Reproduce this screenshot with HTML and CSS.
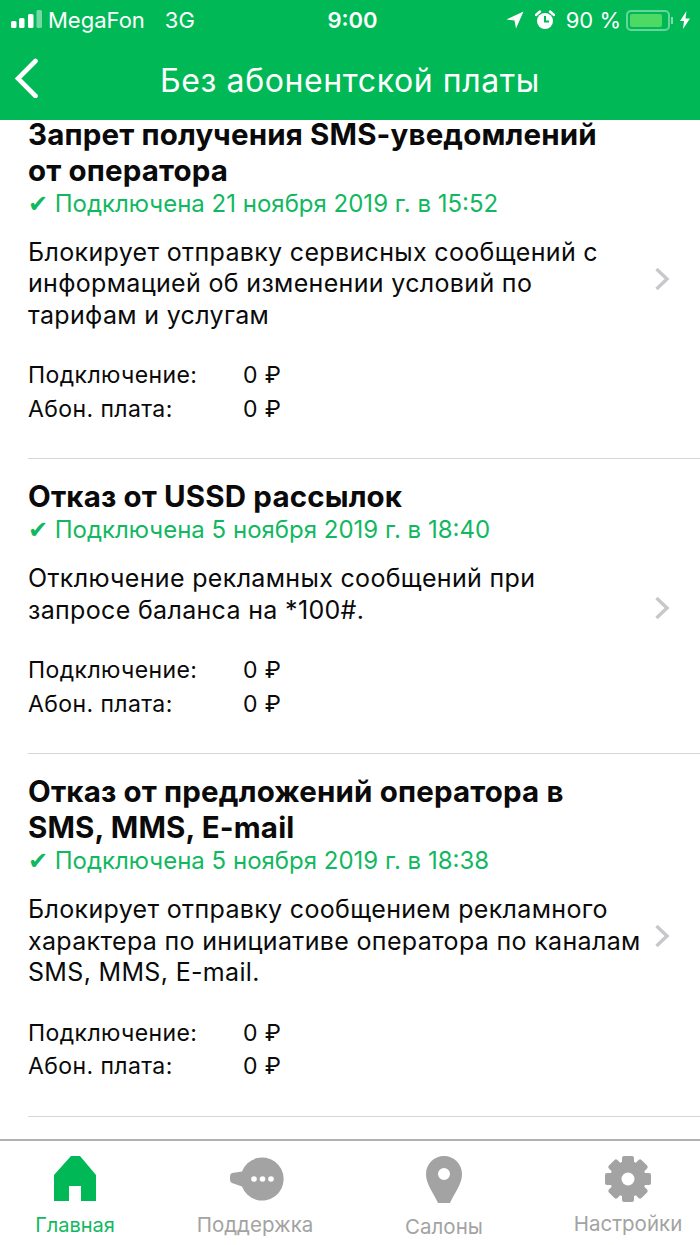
FILE: index.html
```html
<!DOCTYPE html>
<html lang="ru">
<head>
    <meta charset="UTF-8">
    <meta name="viewport" content="width=device-width, initial-scale=1.0">
    <title>Без абонентской платы</title>
    <link rel="stylesheet" href="styles.css">
</head>
<body>

    <header class="topbar">
        <div class="status">
            <div class="status-left">
                <svg class="signal" width="32" height="20" viewBox="0 0 32 20">
                    <rect x="0" y="11" width="5.5" height="7" rx="1.5" fill="#fff"/>
                    <rect x="8" y="8" width="5.5" height="10" rx="1.5" fill="#fff"/>
                    <rect x="17" y="4" width="5.5" height="14" rx="1.5" fill="#fff"/>
                    <rect x="25.5" y="0" width="5.5" height="18" rx="1.5" fill="#fff" fill-opacity="0.45"/>
                </svg>
                <span class="carrier">MegaFon</span>
                <span class="network">3G</span>
            </div>
            <div class="clock">9:00</div>
            <div class="status-right">
                <svg width="18" height="18" viewBox="0 0 18 18"><path d="M17.5 0.5 L0.5 8.5 L8.5 9.5 L10 17.5 Z" fill="#fff"/></svg>
                <svg class="alarm" width="20" height="20" viewBox="0 0 20 20">
                    <circle cx="10" cy="11" r="8" fill="#fff"/>
                    <path d="M10 6 V11.5 H14" fill="none" stroke="#00b956" stroke-width="2"/>
                    <path d="M1 5 L5 1.5 M19 5 L15 1.5" stroke="#fff" stroke-width="2.4" stroke-linecap="round"/>
                </svg>
                <span class="percent">90 %</span>
                <div class="battery"><div class="battery-level"></div></div>
                <div class="battery-cap"></div>
                <svg class="bolt" width="10" height="18" viewBox="0 0 10 18"><path d="M6.5 0 L0 10 H4 L3 18 L10 7.5 H5.5 Z" fill="#fff"/></svg>
            </div>
        </div>
        <div class="navbar">
            <svg class="back" width="26" height="40" viewBox="0 0 26 40"><path d="M22.5 3 L5 20.5 L22.5 38" fill="none" stroke="#fff" stroke-width="4.6" stroke-linecap="round"/></svg>
            <h1 class="navbar-title">Без абонентской платы</h1>
        </div>
    </header>

    <main class="content">
        <div class="list">
            <section class="tariff">
                <div class="tariff-body">
                    <h2 class="tariff-name">Запрет получения SMS-уведомлений от оператора</h2>
                    <p class="tariff-state">✔ Подключена 21 ноября 2019 г. в 15:52</p>
                    <p class="tariff-desc">Блокирует отправку сервисных сообщений с информацией об изменении условий по тарифам и услугам</p>
                    <dl class="fees">
                        <dt>Подключение:</dt><dd>0 ₽</dd>
                        <dt>Абон. плата:</dt><dd>0 ₽</dd>
                    </dl>
                </div>
                <svg class="chevron" width="16" height="26" viewBox="0 0 16 26"><path d="M2.5 3 L13 13 L2.5 23" fill="none" stroke="#c8c8cc" stroke-width="3.4"/></svg>
            </section>
            <section class="tariff">
                <div class="tariff-body">
                    <h2 class="tariff-name">Отказ от USSD рассылок</h2>
                    <p class="tariff-state">✔ Подключена 5 ноября 2019 г. в 18:40</p>
                    <p class="tariff-desc">Отключение рекламных сообщений при<br>запросе баланса на *100#.</p>
                    <dl class="fees">
                        <dt>Подключение:</dt><dd>0 ₽</dd>
                        <dt>Абон. плата:</dt><dd>0 ₽</dd>
                    </dl>
                </div>
                <svg class="chevron" width="16" height="26" viewBox="0 0 16 26"><path d="M2.5 3 L13 13 L2.5 23" fill="none" stroke="#c8c8cc" stroke-width="3.4"/></svg>
            </section>
            <section class="tariff">
                <div class="tariff-body">
                    <h2 class="tariff-name">Отказ от предложений оператора в SMS, MMS, E-mail</h2>
                    <p class="tariff-state">✔ Подключена 5 ноября 2019 г. в 18:38</p>
                    <p class="tariff-desc">Блокирует отправку сообщением рекламного характера по инициативе оператора по каналам SMS, MMS, E-mail.</p>
                    <dl class="fees">
                        <dt>Подключение:</dt><dd>0 ₽</dd>
                        <dt>Абон. плата:</dt><dd>0 ₽</dd>
                    </dl>
                </div>
                <svg class="chevron" width="16" height="26" viewBox="0 0 16 26"><path d="M2.5 3 L13 13 L2.5 23" fill="none" stroke="#c8c8cc" stroke-width="3.4"/></svg>
            </section>
        </div>
    </main>

    <nav class="tabbar">
        <a class="tab tab-home tab-active">
            <svg width="42" height="46" viewBox="0 0 42 46"><path d="M17 0 H26 L42 19 V45 H27 V30 H15 V45 H0 V19 Z" fill="#00b956"/></svg>
            <span class="tab-label">Главная</span>
        </a>
        <a class="tab tab-support">
            <svg width="54" height="46" viewBox="0 0 54 46"><path d="M2 17 L12 15.5 A21.5 21.5 0 1 1 12 30.5 L2 27 Q0 26 0 24 V20 Q0 18 2 17 Z" fill="#a3a3a3"/><circle cx="24" cy="23" r="2.8" fill="#fff"/><circle cx="32.5" cy="23" r="2.8" fill="#fff"/><circle cx="41" cy="23" r="2.8" fill="#fff"/></svg>
            <span class="tab-label">Поддержка</span>
        </a>
        <a class="tab tab-shops">
            <svg width="36" height="48" viewBox="0 0 36 48"><path fill-rule="evenodd" d="M18 0 C8 0 0 8 0 18 C0 28 7 36 12 47 H24 C29 36 36 28 36 18 C36 8 28 0 18 0 Z M18 12 A6 6 0 1 1 18 24 A6 6 0 1 1 18 12 Z" fill="#a3a3a3"/></svg>
            <span class="tab-label">Салоны</span>
        </a>
        <a class="tab tab-settings">
            <svg width="46" height="46" viewBox="-23 -23 46 46">
                <g fill="#a3a3a3">
                    <circle r="18"/>
                    <rect x="-6" y="-23" width="12" height="46" rx="2"/>
                    <rect x="-6" y="-23" width="12" height="46" rx="2" transform="rotate(45)"/>
                    <rect x="-6" y="-23" width="12" height="46" rx="2" transform="rotate(90)"/>
                    <rect x="-6" y="-23" width="12" height="46" rx="2" transform="rotate(135)"/>
                </g>
                <circle r="6.5" fill="#fff"/>
            </svg>
            <span class="tab-label">Настройки</span>
        </a>
    </nav>

</body>
</html>
```

FILE: styles.css
```css
* {
    box-sizing: border-box;
}

html, body {
    height: 100%;
}

body {
    margin: 0;
    display: flex;
    flex-direction: column;
    height: 1245px;
    overflow: hidden;
    background: #ffffff;
    color: #0a0a0a;
    font-family: Inter, "Noto Sans", Arial, sans-serif;
}

/* green header */
.topbar {
    flex: 0 0 120px;
    background: #00b956;
    color: #ffffff;
}

.status {
    display: flex;
    align-items: center;
    height: 40px;
    padding: 0 10px 0 11px;
    font-size: 22px;
}

.status-left,
.status-right {
    flex: 1;
    display: flex;
    align-items: center;
}

.status-right {
    justify-content: flex-end;
}

.signal {
    margin-right: 5px;
}

.network {
    margin-left: 20px;
}

.clock {
    font-weight: 600;
    margin-left: 4px;
}

.alarm {
    margin-left: 11px;
}

.percent {
    margin-left: 11px;
    margin-right: 5px;
}

.battery {
    width: 44px;
    height: 21px;
    padding: 2px;
    border: 2px solid rgba(255, 255, 255, 0.4);
    border-radius: 5px;
}

.battery-level {
    width: 90%;
    height: 100%;
    background: #4cd964;
    border-radius: 2px;
}

.battery-cap {
    width: 2px;
    height: 7px;
    margin-left: 1px;
    background: rgba(255, 255, 255, 0.5);
}

.bolt {
    margin-left: 7px;
}

.navbar {
    position: relative;
    display: flex;
    align-items: center;
    justify-content: center;
    height: 80px;
}

.back {
    position: absolute;
    left: 13px;
    top: 18px;
}

.navbar-title {
    margin: 0;
    font-size: 32px;
    font-weight: 400;
    letter-spacing: 0.6px;
}

/* list of tariffs */
.content {
    flex: 1;
    overflow: hidden;
}

.list {
    margin: -23.5px 0 0 28px;
}

.tariff {
    display: flex;
    align-items: center;
    padding: 19px 30px 32px 0;
    border-bottom: 1px solid #d6d6d6;
}

.tariff-body {
    flex: 1;
}

.chevron {
    flex: none;
    margin: 16px 0 0 8px;
}

.tariff-name {
    margin: 0;
    max-width: 600px;
    font-size: 29.5px;
    line-height: 36px;
    font-weight: 700;
    letter-spacing: 0.15px;
}

.tariff-state {
    margin: 0 0 17px;
    font-size: 24px;
    line-height: 32px;
    color: #12b85f;
}

.tariff-desc {
    margin: 0 0 28px;
    font-size: 25px;
    line-height: 31.5px;
    letter-spacing: 0.33px;
}

.fees {
    display: grid;
    grid-template-columns: 215px 1fr;
    margin: 0;
    font-size: 23px;
    line-height: 33.5px;
    letter-spacing: 0.4px;
}

.fees dd {
    margin: 0;
}

/* bottom tabs */
.tabbar {
    flex: 0 0 106px;
    display: flex;
    border-top: 2px solid #b0b0b0;
    background: #ffffff;
}

.tab {
    flex: none;
    width: 144px;
    display: flex;
    flex-direction: column;
    align-items: center;
    padding-top: 15px;
    color: #a3a3a3;
}

.tab-home { margin-left: 3px; }
.tab-support { margin-left: 36px; }
.tab-shops { margin-left: 45px; }
.tab-settings { margin-left: 40px; }

.tab-support svg {
    margin-left: 4px;
}

.tab-active {
    color: #12b85f;
}

.tab-label {
    margin-top: 11px;
    font-size: 20.5px;
    line-height: 24px;
}

.tab-active .tab-label {
    font-size: 20px;
}

.tab-settings .tab-label {
    margin-top: 10px;
}
```
